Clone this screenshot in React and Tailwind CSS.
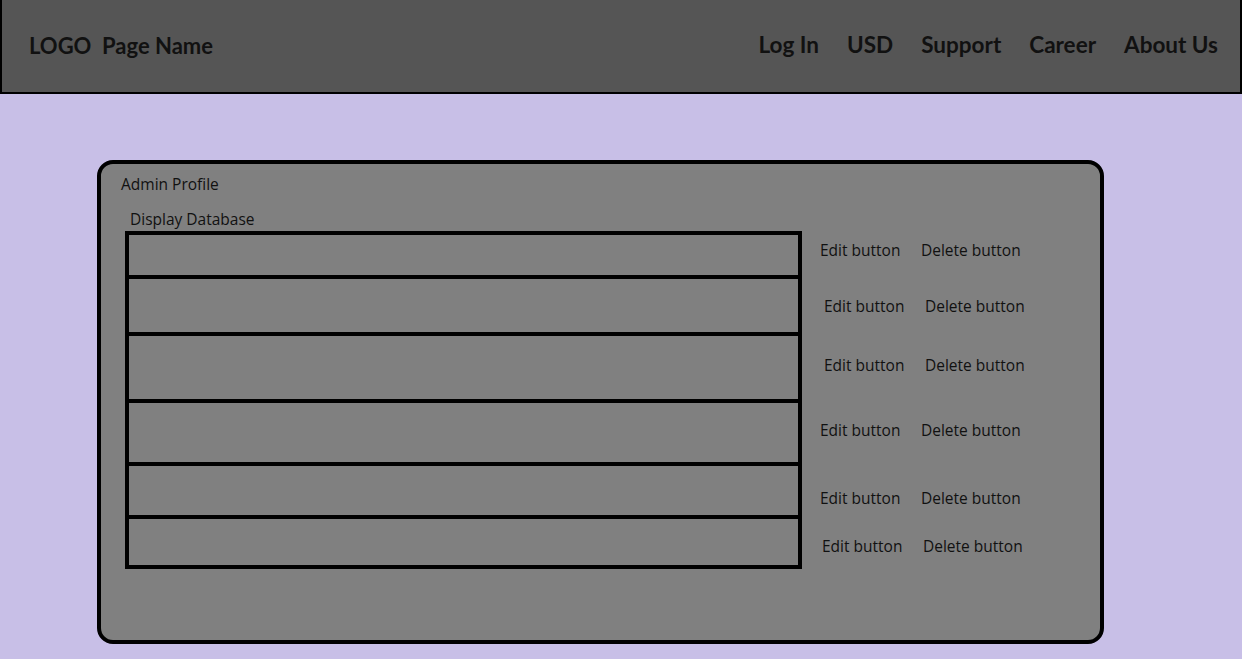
import React from "react";

const rows = [
  { h: "h-[44px]", pt: "pt-[9px]", ml: "ml-[18px]" },
  { h: "h-[57px]", pt: "pt-[21px]", ml: "ml-[22px]" },
  { h: "h-[67px]", pt: "pt-[23px]", ml: "ml-[22px]" },
  { h: "h-[63px]", pt: "pt-[21px]", ml: "ml-[18px]" },
  { h: "h-[53px]", pt: "pt-[26px]", ml: "ml-[18px]" },
  { h: "h-[54px]", pt: "pt-[21px]", ml: "ml-[20px]", last: true },
];

export default function App() {
  return (
    <div className="min-h-[659px] bg-[#c8bfe7] font-['Open_Sans',sans-serif] text-[#111]">
      <header className="h-[94px] bg-[#555555] border-l-2 border-r-2 border-b-2 border-black flex items-center justify-between pl-[27px] pr-[22px] pb-[2px] font-['Lato',sans-serif]">
        <div className="text-[22px] font-bold text-[#111] whitespace-pre">LOGO  Page Name</div>
        <nav className="flex items-center gap-[28px] text-[22.5px] font-bold text-[#111]">
          <span>Log In</span>
          <span>USD</span>
          <span>Support</span>
          <span>Career</span>
          <span>About Us</span>
        </nav>
      </header>
      <main className="pt-[66px] pl-[97px] pb-[15px]">
        <section className="w-[1007px] h-[484px] bg-[#808080] border-4 border-black rounded-[16px] pt-[10px]">
          <div className="pl-[20px] text-[15.5px] leading-[20px]">Admin Profile</div>
          <div className="pl-[29px] mt-[15px] text-[15.5px] leading-[20px]">Display Database</div>
          <div className="pl-[24px] mt-[2px]">
            {rows.map((r, i) => (
              <div key={i} className="flex">
                <div
                  className={`w-[677px] ${r.h} border-l-4 border-r-4 border-t-4 border-black ${
                    r.last ? "border-b-4" : ""
                  }`}
                />
                <div className={`flex text-[15.5px] leading-[20px] ${r.pt} ${r.ml}`}>
                  <span className="w-[101px]">Edit button</span>
                  <span>Delete button</span>
                </div>
              </div>
            ))}
          </div>
        </section>
      </main>
    </div>
  );
}
